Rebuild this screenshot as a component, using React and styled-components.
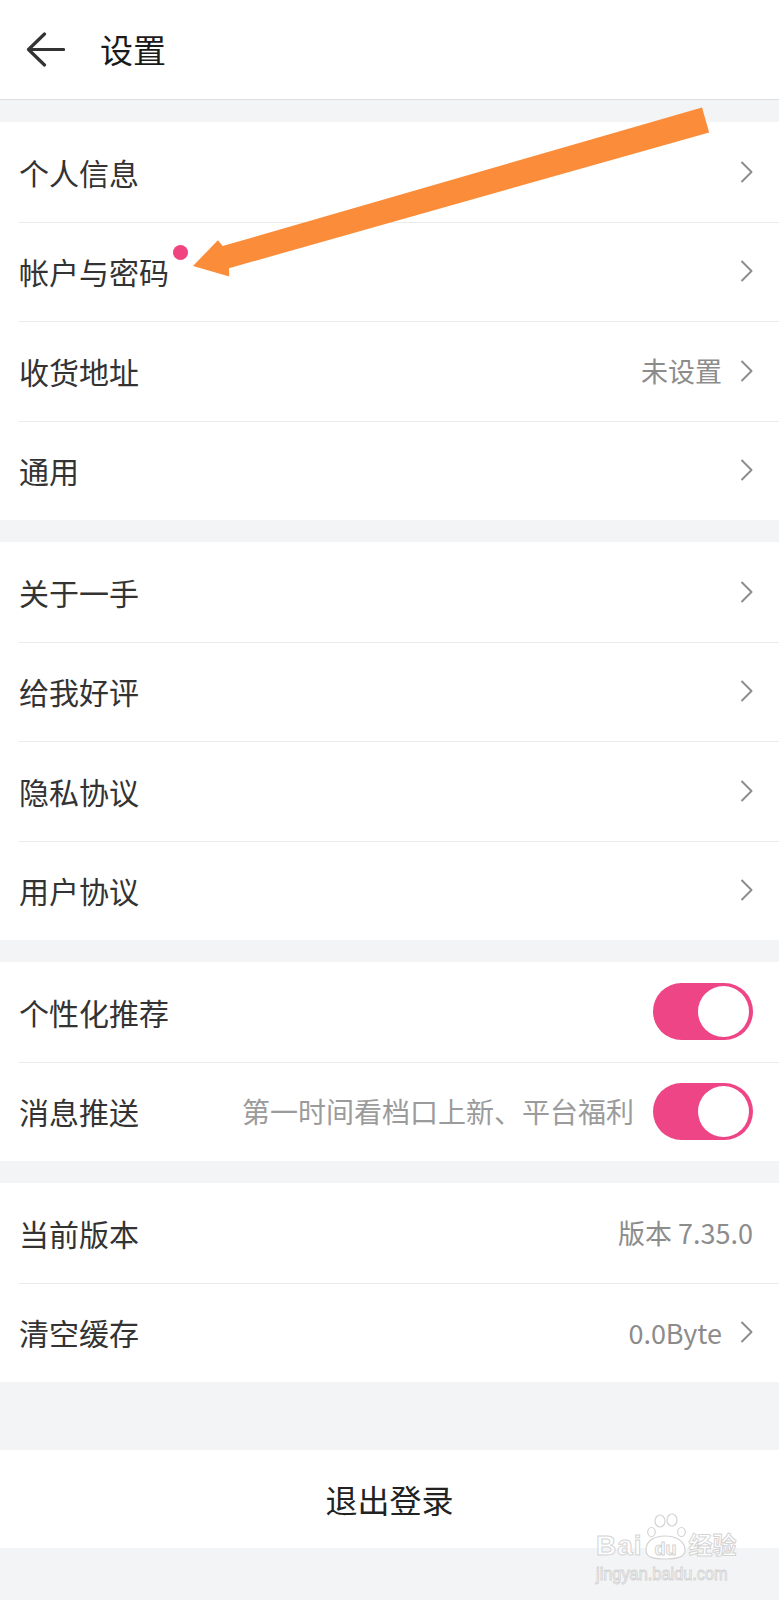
import React from "react";
import styled, { createGlobalStyle } from "styled-components";

const GlobalStyle = createGlobalStyle`
  body {
    margin: 0;
    background: #f3f4f6;
    font-family: "Noto Sans CJK SC", "Noto Sans", sans-serif;
  }
`;

const Page = styled.div`
  position: relative;
  width: 100%;
  min-height: 1600px;
  background: #f3f4f6;
  overflow: hidden;
`;

const Header = styled.div`
  display: flex;
  align-items: center;
  height: 99px;
  padding-left: 26px;
  background: #ffffff;
  border-bottom: 1px solid #dedede;
`;

const Title = styled.div`
  margin-left: 35px;
  font-size: 33px;
  color: #1a1a1a;
  line-height: 1;
`;

const Group = styled.div`
  margin-top: ${({ gap }) => gap || 22}px;
  background: #ffffff;
`;

const Row = styled.div`
  position: relative;
  display: flex;
  align-items: center;
  height: ${({ h }) => h || 99.5}px;
  padding: 0 26px 0 19px;

  & + &::before {
    content: "";
    position: absolute;
    left: 19px;
    right: 0;
    top: 0;
    height: 1px;
    background: #ebebeb;
  }
`;

const Label = styled.span`
  position: relative;
  font-size: 30px;
  line-height: 42px;
  color: #333333;
`;

const Dot = styled.span`
  position: absolute;
  left: calc(100% + 4px);
  top: -5px;
  width: 15px;
  height: 15px;
  border-radius: 50%;
  background: #f0437f;
`;

const Value = styled.span`
  margin-left: auto;
  margin-right: ${({ chevron }) => (chevron ? 18 : 0)}px;
  font-size: ${({ size }) => size || 27}px;
  color: ${({ tone }) => tone || "#8c8c8c"};
  line-height: 1;
`;

const Hint = styled(Value)`
  margin-right: 19px;
`;

const Toggle = styled.div`
  display: flex;
  align-items: center;
  justify-content: flex-end;
  width: 100px;
  height: 57px;
  padding: 0 4px;
  box-sizing: border-box;
  border-radius: 29px;
  background: #ee4586;
`;

const Knob = styled.div`
  width: 51px;
  height: 51px;
  border-radius: 50%;
  background: #ffffff;
`;

const Logout = styled.div`
  display: flex;
  align-items: center;
  justify-content: center;
  height: 98px;
  margin-top: 68px;
  background: #ffffff;
  font-size: 32px;
  color: #222222;
`;

const ArrowLayer = styled.svg`
  position: absolute;
  left: 0;
  top: 0;
  pointer-events: none;
`;

const Watermark = styled.div`
  position: absolute;
  left: 596px;
  top: 1512px;
  display: flex;
  flex-direction: column;
  pointer-events: none;
`;

const MarkTop = styled.div`
  display: flex;
  align-items: flex-end;
`;

const MarkText = styled.span`
  font-family: "Liberation Sans", Arial, sans-serif;
  font-weight: bold;
  font-size: ${({ size }) => size}px;
  line-height: 1;
  color: rgba(255, 255, 255, 0.85);
  -webkit-text-stroke: 1px #d4d4d4;
  letter-spacing: ${({ spacing }) => spacing || 0}px;
`;

const MarkCjk = styled(MarkText)`
  font-family: "Noto Sans CJK SC", sans-serif;
  margin-left: 2px;
  margin-bottom: 4px;
`;

const MarkUrl = styled(MarkText)`
  font-weight: normal;
  margin-top: 4px;
  transform: scaleX(0.86);
  transform-origin: left center;
`;

const Chevron = () => (
  <svg width="13" height="22" viewBox="0 0 13 22">
    <polyline
      points="1.5,1 11.5,11 1.5,21"
      fill="none"
      stroke="#8c8c8c"
      strokeWidth="2"
      strokeLinejoin="round"
    />
  </svg>
);

const BackIcon = () => (
  <svg width="39" height="36" viewBox="0 0 39 36">
    <path
      d="M37.5 17.5 H3 M18.5 2 L2.5 17.5 L18.5 33"
      fill="none"
      stroke="#333"
      strokeWidth="3.2"
      strokeLinecap="round"
      strokeLinejoin="round"
    />
  </svg>
);

const Paw = () => (
  <svg width="44" height="48" viewBox="0 0 44 48">
    <g fill="rgba(255,255,255,0.85)" stroke="#d4d4d4" strokeWidth="1.2">
      <ellipse cx="8.5" cy="20" rx="3.8" ry="4.5" />
      <ellipse cx="17" cy="9" rx="5" ry="6" />
      <ellipse cx="29" cy="8" rx="5" ry="6" />
      <ellipse cx="38.5" cy="20" rx="3.8" ry="4.5" />
      <path d="M3 38 C3 27 14 24 22 24 C31 24 42 28 42 38 C42 45 35 47 22 47 C9 47 3 45 3 38 Z" />
    </g>
    <text
      x="22.5"
      y="43"
      textAnchor="middle"
      fontFamily="Liberation Sans, Arial, sans-serif"
      fontWeight="bold"
      fontSize="18"
      fill="rgba(255,255,255,0.85)"
      stroke="#d4d4d4"
      strokeWidth="1"
    >
      du
    </text>
  </svg>
);

const NavRow = ({ label, value, dot }) => (
  <Row>
    <Label>
      {label}
      {dot && <Dot />}
    </Label>
    <Value chevron>{value}</Value>
    <Chevron />
  </Row>
);

const SwitchRow = ({ label, hint }) => (
  <Row>
    <Label>{label}</Label>
    <Hint size={28} tone="#9b9b9b">
      {hint}
    </Hint>
    <Toggle>
      <Knob />
    </Toggle>
  </Row>
);

export default function App() {
  return (
    <Page>
      <GlobalStyle />
      <Header>
        <BackIcon />
        <Title>设置</Title>
      </Header>

      <Group>
        <NavRow label="个人信息" />
        <NavRow label="帐户与密码" dot />
        <NavRow label="收货地址" value="未设置" />
        <NavRow label="通用" />
      </Group>

      <Group>
        <NavRow label="关于一手" />
        <NavRow label="给我好评" />
        <NavRow label="隐私协议" />
        <NavRow label="用户协议" />
      </Group>

      <Group>
        <SwitchRow label="个性化推荐" />
        <SwitchRow label="消息推送" hint="第一时间看档口上新、平台福利" />
      </Group>

      <Group>
        <Row>
          <Label>当前版本</Label>
          <Value>版本 7.35.0</Value>
        </Row>
        <NavRow label="清空缓存" value="0.0Byte" />
      </Group>

      <Logout>退出登录</Logout>

      {/* annotation arrow drawn over the list */}
      <ArrowLayer width="779" height="300" viewBox="0 0 779 300">
        <g transform="translate(193 266) rotate(-15.9)">
          <polygon
            points="0,0 31,-18 34,-11 533,-13 533,13 34,12 32,20"
            fill="#fb8c39"
          />
        </g>
      </ArrowLayer>

      <Watermark>
        <MarkTop>
          <MarkText size={28} spacing={1}>Bai</MarkText>
          <Paw />
          <MarkCjk size={24}>经验</MarkCjk>
        </MarkTop>
        <MarkUrl size={19}>jingyan.baidu.com</MarkUrl>
      </Watermark>
    </Page>
  );
}
